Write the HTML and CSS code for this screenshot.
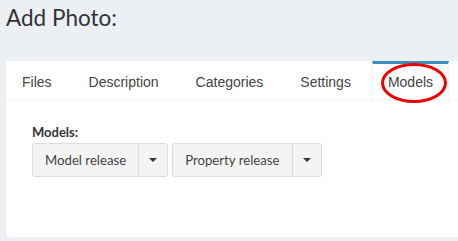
FILE: index.html
```html
<!DOCTYPE html>
<html lang="en">

<head>
    <meta charset="UTF-8">
    <meta name="viewport" content="width=device-width, initial-scale=1.0">
    <title>Add Photo</title>
    <link rel="stylesheet" href="styles.css">
</head>

<body>
    <h1 class="page-title">Add Photo:</h1>

    <div class="tabs-box">
        <ul class="tabs">
            <li><a href="#">Files</a></li>
            <li><a href="#">Description</a></li>
            <li><a href="#">Categories</a></li>
            <li><a href="#">Settings</a></li>
            <li class="active"><a href="#">Models</a></li>
        </ul>
        <span class="mark"></span>

        <div class="tab-content">
            <label class="field-label">Models:</label>
            <div class="btn-row">
                <div class="btn-group">
                    <button type="button" class="btn">Model release</button>
                    <button type="button" class="btn toggle"><span class="caret"></span></button>
                </div>
                <div class="btn-group">
                    <button type="button" class="btn">Property release</button>
                    <button type="button" class="btn toggle"><span class="caret"></span></button>
                </div>
            </div>
        </div>
    </div>
</body>

</html>
```

FILE: styles.css
```css
body {
    margin: 0;
    background: #ecf0f5;
    font-family: Lato, "Liberation Sans", sans-serif;
    color: #333;
    overflow: hidden;
}

.page-title {
    margin: 0;
    padding: 4px 0 0 6px;
    font-size: 22.5px;
    font-weight: normal;
    line-height: 28px;
}

.tabs-box {
    position: relative;
    margin: 29px 0 0 6px;
    width: 470px;
    background: #fff;
    border-radius: 3px;
    box-shadow: 0 1px 1px rgba(0, 0, 0, 0.12);
}

.tabs {
    display: flex;
    margin: 0;
    padding: 0;
    list-style: none;
    border-bottom: 1px solid #f4f4f4;
}

.tabs li {
    margin-right: 5px;
}

.tabs a {
    display: block;
    padding: 8px 15px;
    border-top: 3px solid transparent;
    border-left: 1px solid transparent;
    border-right: 1px solid transparent;
    font-family: "Liberation Sans", Arial, sans-serif;
    font-size: 14px;
    line-height: 20px;
    color: #444;
    text-decoration: none;
}

.tabs li.active a {
    border-top-color: #3c8dbc;
    border-left-color: #f4f4f4;
    border-right-color: #f4f4f4;
}

/* red annotation circle */
.mark {
    position: absolute;
    left: 375px;
    top: 2px;
    width: 60px;
    height: 34px;
    border: 3.5px solid #e00;
    border-radius: 50%;
}

.tab-content {
    padding: 21px 26px 60px;
}

.field-label {
    display: block;
    margin-bottom: 1px;
    font-size: 13px;
    font-weight: bold;
    line-height: 20px;
}

.btn-row {
    display: flex;
    gap: 4px;
}

.btn-group {
    display: flex;
}

.btn {
    padding: 6px 12px;
    background: #f4f4f4;
    border: 1px solid #ddd;
    border-radius: 3px 0 0 3px;
    font-family: Lato, "Liberation Sans", sans-serif;
    font-size: 13.2px;
    line-height: 20px;
    color: #444;
}

.btn.toggle {
    display: flex;
    align-items: center;
    justify-content: center;
    width: 30px;
    margin-left: -1px;
    padding: 0;
    border-radius: 0 3px 3px 0;
}

.caret {
    border-top: 4px solid #333;
    border-left: 4px solid transparent;
    border-right: 4px solid transparent;
}
```
